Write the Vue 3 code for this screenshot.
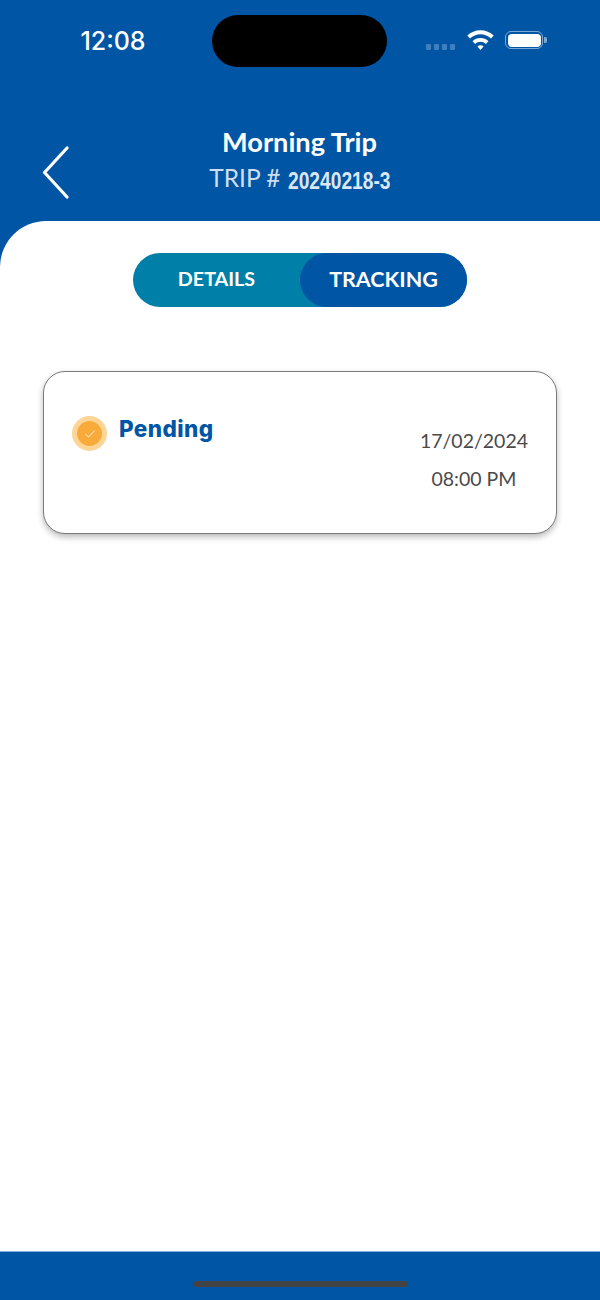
<template>
  <div class="screen">
    <header class="header">
      <div class="status-bar">
        <span class="clock">12:08</span>
        <div class="island"></div>
        <div class="status-icons">
          <div class="signal">
            <i v-for="n in 4" :key="n"></i>
          </div>
          <svg class="wifi" width="27" height="20" viewBox="2 3 20 15">
            <path d="M12 3.200c3.900 0 7.300 1.500 9.900 4l-2 2.100C17.800 7.300 15 6.100 12 6.100S6.200 7.300 4.100 9.300l-2-2.100c2.600-2.500 6-4 9.900-4z" fill="#fff"/>
            <path d="M12 9c2.300 0 4.400.9 6 2.400l-2 2.100C14.900 12.500 13.500 11.900 12 11.900s-2.900.6-4 1.600l-2-2.100C7.600 9.900 9.700 9 12 9z" fill="#fff"/>
            <path d="M12 14.400c.9 0 1.700.3 2.300.9L12 18l-2.300-2.700c.6-.6 1.400-.9 2.300-.9z" fill="#fff"/>
          </svg>
          <div class="battery">
            <div class="battery-fill"></div>
          </div>
          <div class="battery-cap"></div>
        </div>
      </div>
      <div class="title-row">
        <button class="back" aria-label="Back">
          <svg width="28" height="54" viewBox="0 0 28 54">
            <path d="M25 2 L2.500 26.500 L25 51" fill="none" stroke="#fff" stroke-width="3.200" stroke-linecap="round" stroke-linejoin="round"/>
          </svg>
        </button>
        <div class="titles">
          <div class="title">{{ trip.name }}</div>
          <div class="subtitle">TRIP # <span class="trip-no">{{ trip.number }}</span></div>
        </div>
      </div>
    </header>

    <div class="body-wrap">
      <main class="body">
        <div class="tabs">
          <div class="tab">DETAILS</div>
          <div class="tab active">TRACKING</div>
        </div>

        <section class="card">
          <div class="status">
            <span class="dot">
              <svg width="12" height="10" viewBox="0 0 12 10">
                <path d="M1.500 5.200 L4.500 8 L10.500 1.800" fill="none" stroke="#fff" stroke-width="1" stroke-linecap="round" stroke-linejoin="round" opacity="0.85"/>
              </svg>
            </span>
            <span class="status-label">{{ trip.status }}</span>
          </div>
          <div class="when">
            <div>{{ trip.date }}</div>
            <div>{{ trip.time }}</div>
          </div>
        </section>
      </main>
    </div>

    <footer class="footer">
      <div class="home-bar"></div>
    </footer>
  </div>
</template>

<script setup>
const trip = {
  name: 'Morning Trip',
  number: '20240218-3',
  status: 'Pending',
  date: '17/02/2024',
  time: '08:00 PM'
}
</script>

<style>
html, body {
  margin: 0;
  background: #fff;
}
</style>

<style scoped>
.screen {
  width: 600px;
  height: 1300px;
  display: flex;
  flex-direction: column;
  background: #fff;
  font-family: Lato, "Liberation Sans", sans-serif;
  overflow: hidden;
}

.header {
  height: 221px;
  box-sizing: border-box;
  flex-shrink: 0;
  background: #0155a5;
  color: #fff;
}

.status-bar {
  height: 67px;
  padding-top: 15px;
  box-sizing: border-box;
  display: flex;
  align-items: center;
}

.clock {
  width: 80px;
  margin-left: 73px;
  text-align: center;
  font-family: Inter, sans-serif;
  font-size: 25px;
  font-weight: 500;
}

.island {
  width: 175px;
  height: 52px;
  margin-left: 59px;
  border-radius: 26px;
  background: #000;
}

.status-icons {
  margin-left: 39px;
  display: flex;
  align-items: center;
}

.signal {
  display: flex;
  gap: 3px;
  margin-top: 12px;
}

.signal i {
  width: 5px;
  height: 6px;
  border-radius: 1px;
  background: #3f7fc0;
}

.wifi {
  margin-left: 12px;
  margin-top: -2px;
}

.battery {
  width: 38px;
  height: 18px;
  margin-left: 11px;
  margin-top: -2px;
  box-sizing: border-box;
  border: 1.500px solid #7da9d6;
  border-radius: 6px;
  padding: 1.500px;
}

.battery-fill {
  height: 100%;
  border-radius: 4px;
  background: #fff;
}

.battery-cap {
  width: 2.500px;
  height: 6px;
  margin-left: 1px;
  margin-top: -2px;
  border-radius: 0 2px 2px 0;
  background: #7da9d6;
}

.title-row {
  position: relative;
  padding-top: 58px;
}

.back {
  position: absolute;
  left: 42px;
  top: 79px;
  padding: 0;
  border: 0;
  background: none;
  line-height: 0;
}

.titles {
  text-align: center;
}

.title {
  font-size: 27.200px;
  font-weight: 700;
  line-height: 34px;
  margin-left: -1px;
}

.subtitle {
  margin-top: 2px;
  font-size: 24.500px;
  line-height: 34px;
  color: #cfdeee;
}

.trip-no {
  font-family: "Liberation Sans", sans-serif;
  font-size: 24px;
  font-weight: 700;
  display: inline-block;
  transform: scaleX(0.8);
  transform-origin: left center;
  margin-right: -25px;
  margin-left: 1px;
  color: #dbe6f2;
  vertical-align: -2px;
}

.body-wrap {
  flex: 1;
  display: flex;
  background: #0155a5;
}

.body {
  flex: 1;
  background: #fff;
  border-top-left-radius: 46px;
  padding: 32px 43px 0;
  box-sizing: border-box;
}

.tabs {
  width: 334px;
  height: 54px;
  margin: 0 auto;
  display: flex;
  border-radius: 27px;
  background: #0080a8;
  color: #fff;
  font-size: 19.700px;
  font-weight: 700;
}

.tab {
  flex: 1;
  box-sizing: border-box;
  padding-bottom: 3px;
  display: flex;
  align-items: center;
  justify-content: center;
  border-radius: 27px;
}

.active {
  background: #0155a5;
  font-size: 21.500px;
}

.card {
  height: 163px;
  margin-top: 64px;
  box-sizing: border-box;
  border: 1.500px solid #7a7a7a;
  border-radius: 22px;
  box-shadow: 0 3px 6px rgba(0, 0, 0, 0.28);
  background: #fff;
  display: flex;
  justify-content: space-between;
  padding: 44px 28px 0;
}

.status {
  display: flex;
  align-items: flex-start;
}

.dot {
  width: 25px;
  height: 25px;
  border: 5px solid #fdd596;
  border-radius: 50%;
  background: #f8ab3a;
  display: flex;
  align-items: center;
  justify-content: center;
  flex-shrink: 0;
}

.status-label {
  margin-left: 12px;
  margin-top: -1px;
  font-family: Inter, "Noto Sans", sans-serif;
  font-size: 22.500px;
  letter-spacing: 0.4px;
  font-weight: 800;
  color: #0155a5;
}

.when {
  text-align: center;
  font-size: 19.500px;
  line-height: 37.500px;
  color: #4a4a4a;
  margin-top: 6px;
}

.footer {
  height: 48px;
  flex-shrink: 0;
  background: #0155a5;
  border-top: 1px solid #7fb0e0;
  display: flex;
  justify-content: center;
}

.home-bar {
  width: 215px;
  height: 6px;
  margin-top: 29px;
  border-radius: 3px;
  background: #444;
}
</style>
